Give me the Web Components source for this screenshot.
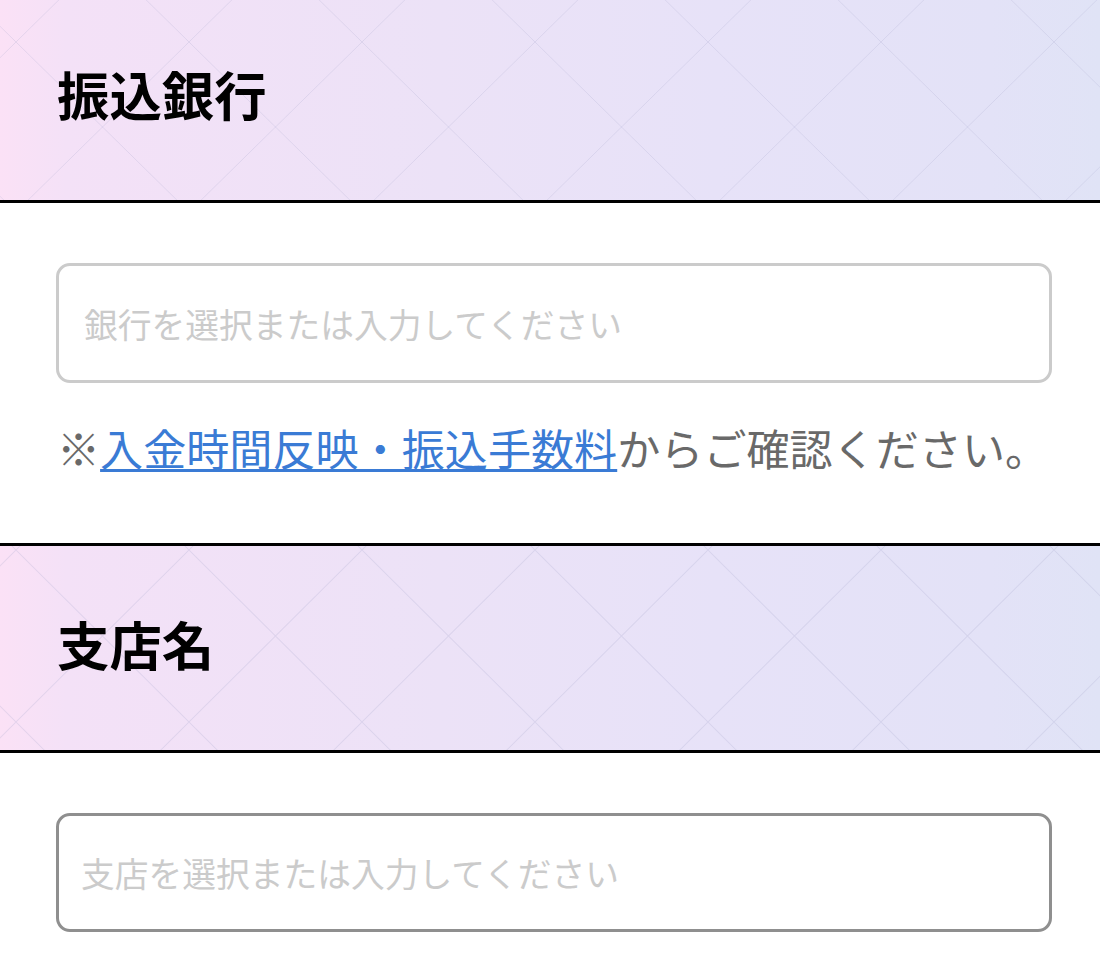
<!DOCTYPE html>
<html lang="ja">
<head>
<meta charset="utf-8">
<title>振込先</title>
<style>
  html, body { margin: 0; background: #fff; }
  body {
    overflow: hidden;
    font-family: "Noto Sans CJK JP", "Noto Sans", sans-serif;
  }
  .page { margin-top: -7px; }
</style>
</head>
<body>
<div class="page">
  <field-section label="振込銀行" grid-y="46" grid-h="170">
    <text-box border="#cbcbcb" inset="28" tall="120">銀行を選択または入力してください</text-box>
    <field-note>※<a href="#">入金時間反映・振込手数料</a>からご確認ください。</field-note>
  </field-section>
  <field-section label="支店名" grid-y="4" grid-h="172">
    <text-box border="#8f8f8f" inset="25" tall="119">支店を選択または入力してください</text-box>
  </field-section>
</div>

<script>
const lattice = encodeURIComponent(
  '<svg xmlns="http://www.w3.org/2000/svg" viewBox="0 0 173 170" preserveAspectRatio="none">' +
  '<path d="M0 0L173 170M173 0L0 170" stroke="#a9a6cc" stroke-opacity=".25" fill="none"/></svg>'
);

class SectionHead extends HTMLElement {
  constructor() {
    super();
    this.attachShadow({ mode: 'open' });
    this.shadowRoot.innerHTML = `
      <style>
        :host {
          display: flex;
          align-items: center;
          box-sizing: border-box;
          height: 210px;
          padding: 0 57px 10px;
          border-top: 3px solid #000;
          border-bottom: 3px solid #000;
          color: #000;
          font-size: 52.4px;
          font-weight: 700;
          line-height: 1.2;
          background:
            url("data:image/svg+xml,${lattice}") 16px var(--grid-y, 0) / 173px var(--grid-h, 170px),
            linear-gradient(90deg, #fbe1f6 0%, #f4e1f7 6%, #ece2f7 40%, #e7e2f8 65%, #e3e2f7 90%, #e0e3f6 100%);
          background-origin: padding-box;
        }
      </style>
      <slot></slot>`;
  }
}

class TextBox extends HTMLElement {
  constructor() {
    super();
    this.attachShadow({ mode: 'open' });
    this.shadowRoot.innerHTML = `
      <style>
        :host {
          display: flex;
          align-items: center;
          box-sizing: border-box;
          height: var(--tall, 120px);
          padding-left: var(--inset, 25px);
          border: 3px solid var(--border, #ccc);
          border-radius: 14px;
          background: #fff;
          color: #cbcbcb;
          font-size: 33.75px;
        }
      </style>
      <slot></slot>`;
  }

  connectedCallback() {
    this.style.setProperty('--border', this.getAttribute('border'));
    this.style.setProperty('--inset', this.getAttribute('inset') - 3 + 'px');
    this.style.setProperty('--tall', this.getAttribute('tall') + 'px');
    this.setAttribute('role', 'textbox');
  }
}

class FieldNote extends HTMLElement {
  constructor() {
    super();
    this.attachShadow({ mode: 'open' });
    this.shadowRoot.innerHTML = `
      <style>
        :host {
          display: block;
          margin: 33px 0 0 1px;
          color: #696969;
          font-size: 43.1px;
          line-height: 62px;
          white-space: nowrap;
        }
        ::slotted(a) {
          color: #3a7bd5;
          text-decoration: underline;
          text-decoration-thickness: 3px;
          text-underline-offset: 3px;
        }
      </style>
      <slot></slot>`;
  }
}

class FieldSection extends HTMLElement {
  constructor() {
    super();
    this.attachShadow({ mode: 'open' });
    this.shadowRoot.innerHTML = `
      <style>
        :host { display: block; }
        .body { padding: 60px 48px 65px 56px; }
      </style>
      <section-head></section-head>
      <div class="body"><slot></slot></div>`;
  }

  connectedCallback() {
    const head = this.shadowRoot.querySelector('section-head');
    head.textContent = this.getAttribute('label');
    head.style.setProperty('--grid-y', this.getAttribute('grid-y') + 'px');
    head.style.setProperty('--grid-h', this.getAttribute('grid-h') + 'px');
  }
}

customElements.define('section-head', SectionHead);
customElements.define('text-box', TextBox);
customElements.define('field-note', FieldNote);
customElements.define('field-section', FieldSection);
</script>
</body>
</html>
